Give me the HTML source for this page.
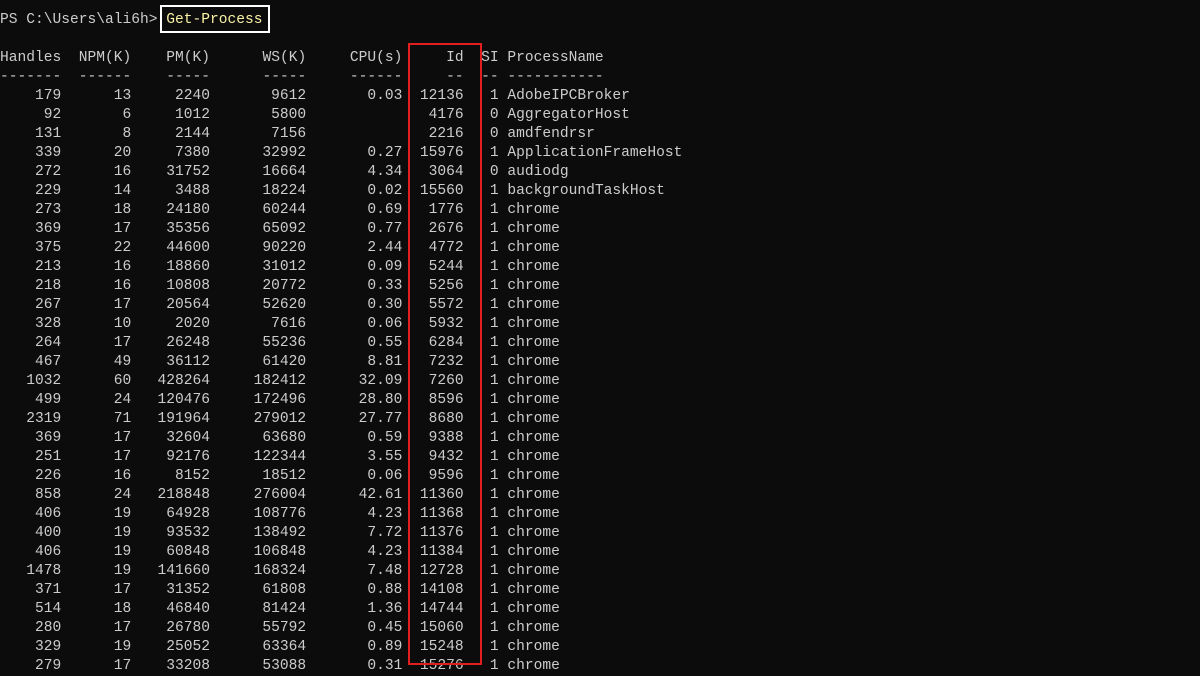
<!DOCTYPE html>
<html><head><meta charset="utf-8"><style>
html,body{margin:0;padding:0;background:#0c0c0c;width:1200px;height:665px;overflow:hidden}
#t{position:absolute;left:0;top:11px;font-family:"Liberation Mono",monospace;font-size:14.58px;line-height:19px;color:#cccccc}
.r{height:19px;white-space:pre}
.r span{display:inline-block;text-align:right}
.a{width:7ch}.b{width:8ch}.c{width:9ch}.d{width:11ch}.e{width:11ch}.f{width:7ch}.g{width:4ch}
.y{color:#f9f1a5}
#box1{position:absolute;left:160px;top:5px;width:106px;height:24px;border:2px solid #fff}
#box2{position:absolute;left:408px;top:43px;width:70px;height:618px;border:2px solid #e31e1e}
</style></head><body>
<div id="t"><div class="r">PS C:\Users\ali6h&gt; <span class="y" style="text-align:left">Get-Process</span></div><div class="r"> </div><div class="r">Handles  NPM(K)    PM(K)      WS(K)     CPU(s)     Id  SI ProcessName</div><div class="r">-------  ------    -----      -----     ------     --  -- -----------</div>
<div class="r"><span class="a">179</span><span class="b">13</span><span class="c">2240</span><span class="d">9612</span><span class="e">0.03</span><span class="f">12136</span><span class="g">1</span> AdobeIPCBroker</div>
<div class="r"><span class="a">92</span><span class="b">6</span><span class="c">1012</span><span class="d">5800</span><span class="e"></span><span class="f">4176</span><span class="g">0</span> AggregatorHost</div>
<div class="r"><span class="a">131</span><span class="b">8</span><span class="c">2144</span><span class="d">7156</span><span class="e"></span><span class="f">2216</span><span class="g">0</span> amdfendrsr</div>
<div class="r"><span class="a">339</span><span class="b">20</span><span class="c">7380</span><span class="d">32992</span><span class="e">0.27</span><span class="f">15976</span><span class="g">1</span> ApplicationFrameHost</div>
<div class="r"><span class="a">272</span><span class="b">16</span><span class="c">31752</span><span class="d">16664</span><span class="e">4.34</span><span class="f">3064</span><span class="g">0</span> audiodg</div>
<div class="r"><span class="a">229</span><span class="b">14</span><span class="c">3488</span><span class="d">18224</span><span class="e">0.02</span><span class="f">15560</span><span class="g">1</span> backgroundTaskHost</div>
<div class="r"><span class="a">273</span><span class="b">18</span><span class="c">24180</span><span class="d">60244</span><span class="e">0.69</span><span class="f">1776</span><span class="g">1</span> chrome</div>
<div class="r"><span class="a">369</span><span class="b">17</span><span class="c">35356</span><span class="d">65092</span><span class="e">0.77</span><span class="f">2676</span><span class="g">1</span> chrome</div>
<div class="r"><span class="a">375</span><span class="b">22</span><span class="c">44600</span><span class="d">90220</span><span class="e">2.44</span><span class="f">4772</span><span class="g">1</span> chrome</div>
<div class="r"><span class="a">213</span><span class="b">16</span><span class="c">18860</span><span class="d">31012</span><span class="e">0.09</span><span class="f">5244</span><span class="g">1</span> chrome</div>
<div class="r"><span class="a">218</span><span class="b">16</span><span class="c">10808</span><span class="d">20772</span><span class="e">0.33</span><span class="f">5256</span><span class="g">1</span> chrome</div>
<div class="r"><span class="a">267</span><span class="b">17</span><span class="c">20564</span><span class="d">52620</span><span class="e">0.30</span><span class="f">5572</span><span class="g">1</span> chrome</div>
<div class="r"><span class="a">328</span><span class="b">10</span><span class="c">2020</span><span class="d">7616</span><span class="e">0.06</span><span class="f">5932</span><span class="g">1</span> chrome</div>
<div class="r"><span class="a">264</span><span class="b">17</span><span class="c">26248</span><span class="d">55236</span><span class="e">0.55</span><span class="f">6284</span><span class="g">1</span> chrome</div>
<div class="r"><span class="a">467</span><span class="b">49</span><span class="c">36112</span><span class="d">61420</span><span class="e">8.81</span><span class="f">7232</span><span class="g">1</span> chrome</div>
<div class="r"><span class="a">1032</span><span class="b">60</span><span class="c">428264</span><span class="d">182412</span><span class="e">32.09</span><span class="f">7260</span><span class="g">1</span> chrome</div>
<div class="r"><span class="a">499</span><span class="b">24</span><span class="c">120476</span><span class="d">172496</span><span class="e">28.80</span><span class="f">8596</span><span class="g">1</span> chrome</div>
<div class="r"><span class="a">2319</span><span class="b">71</span><span class="c">191964</span><span class="d">279012</span><span class="e">27.77</span><span class="f">8680</span><span class="g">1</span> chrome</div>
<div class="r"><span class="a">369</span><span class="b">17</span><span class="c">32604</span><span class="d">63680</span><span class="e">0.59</span><span class="f">9388</span><span class="g">1</span> chrome</div>
<div class="r"><span class="a">251</span><span class="b">17</span><span class="c">92176</span><span class="d">122344</span><span class="e">3.55</span><span class="f">9432</span><span class="g">1</span> chrome</div>
<div class="r"><span class="a">226</span><span class="b">16</span><span class="c">8152</span><span class="d">18512</span><span class="e">0.06</span><span class="f">9596</span><span class="g">1</span> chrome</div>
<div class="r"><span class="a">858</span><span class="b">24</span><span class="c">218848</span><span class="d">276004</span><span class="e">42.61</span><span class="f">11360</span><span class="g">1</span> chrome</div>
<div class="r"><span class="a">406</span><span class="b">19</span><span class="c">64928</span><span class="d">108776</span><span class="e">4.23</span><span class="f">11368</span><span class="g">1</span> chrome</div>
<div class="r"><span class="a">400</span><span class="b">19</span><span class="c">93532</span><span class="d">138492</span><span class="e">7.72</span><span class="f">11376</span><span class="g">1</span> chrome</div>
<div class="r"><span class="a">406</span><span class="b">19</span><span class="c">60848</span><span class="d">106848</span><span class="e">4.23</span><span class="f">11384</span><span class="g">1</span> chrome</div>
<div class="r"><span class="a">1478</span><span class="b">19</span><span class="c">141660</span><span class="d">168324</span><span class="e">7.48</span><span class="f">12728</span><span class="g">1</span> chrome</div>
<div class="r"><span class="a">371</span><span class="b">17</span><span class="c">31352</span><span class="d">61808</span><span class="e">0.88</span><span class="f">14108</span><span class="g">1</span> chrome</div>
<div class="r"><span class="a">514</span><span class="b">18</span><span class="c">46840</span><span class="d">81424</span><span class="e">1.36</span><span class="f">14744</span><span class="g">1</span> chrome</div>
<div class="r"><span class="a">280</span><span class="b">17</span><span class="c">26780</span><span class="d">55792</span><span class="e">0.45</span><span class="f">15060</span><span class="g">1</span> chrome</div>
<div class="r"><span class="a">329</span><span class="b">19</span><span class="c">25052</span><span class="d">63364</span><span class="e">0.89</span><span class="f">15248</span><span class="g">1</span> chrome</div>
<div class="r"><span class="a">279</span><span class="b">17</span><span class="c">33208</span><span class="d">53088</span><span class="e">0.31</span><span class="f">15276</span><span class="g">1</span> chrome</div>
</div>
<div id="box1"></div>
<div id="box2"></div>
</body></html>
